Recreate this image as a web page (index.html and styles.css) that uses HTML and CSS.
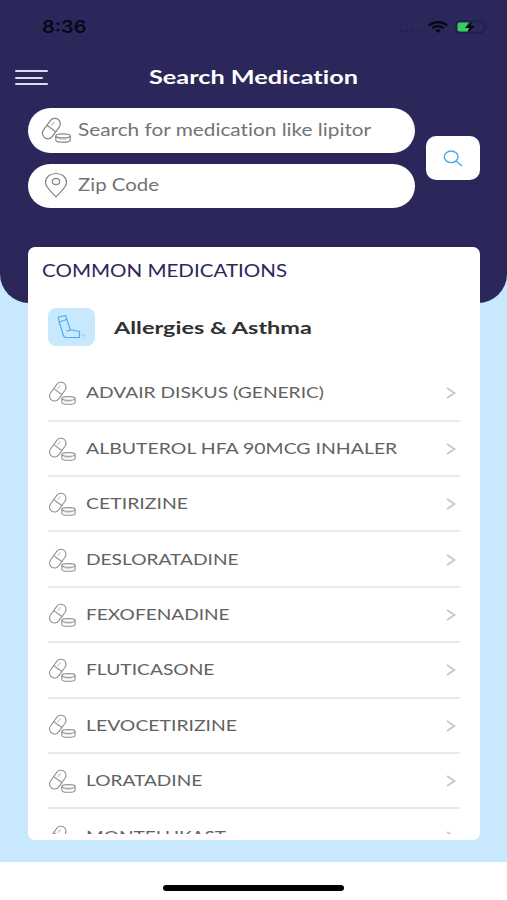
FILE: index.html
```
<!DOCTYPE html>
<html lang="en">
<head>
<meta charset="utf-8">
<title>Search Medication</title>
<link rel="stylesheet" href="styles.css">
</head>
<body>
<svg class="defs" aria-hidden="true">
  <symbol id="pills" viewBox="0 0 30 26">
    <g fill="none" stroke="currentColor" stroke-width="1.2">
      <rect x="4.900" y=".2" width="11" height="22.600" rx="5.500" transform="rotate(36 10.400 11.500)"/>
      <path d="M6 8.300 14.800 14.700"/>
      <path d="M10.300 8.500 13.300 4.800" stroke-opacity=".5"/>
      <path d="M14.800 18.900v4c0 3 14.400 3 14.400 0v-4"/>
      <ellipse cx="22" cy="18.900" rx="7.200" ry="2"/>
      <path d="M18 22.200h7" stroke-opacity=".35"/>
    </g>
  </symbol>
  <symbol id="chevron" viewBox="0 0 10 12">
    <path d="m1 1 7.5 5L1 11" fill="none" stroke="#c6c6ca" stroke-width="1.7"/>
  </symbol>
</svg>
<div class="screen">
  <header class="top">
    <div class="status">
      <span class="time"><span class="w">8:36</span></span>
      <span class="dots"><i></i><i></i><i></i><i></i></span>
      <svg class="wifi" viewBox="0 0 20 12">
        <g fill="none" stroke="#080815" stroke-width="2.3">
          <path d="M1 4.3C6-.1 14-.1 19 4.3"/><path d="M4.3 7.2c3.3-2.7 8.1-2.7 11.4 0"/>
        </g>
        <path d="M7 9.3c1.8-1.4 4.2-1.4 6 0L10 12z" fill="#080815"/>
      </svg>
      <svg class="battery" viewBox="0 0 34 14">
        <rect x="1" y="1" width="28" height="12" rx="3.5" fill="none" stroke="#1c1a42"/>
        <path d="M31 5.2c2 .6 2 3 0 3.6z" fill="#1c1a42"/>
        <path d="M4.5 2.5H14L10 8h4l-1.5 3.5h-8Q2.5 11.500 2.500 9.500v-5q0-2 2-2z" fill="#37cf5b"/>
        <path d="M17.500 1.500 10 8h4.500L13 12.500 20 6h-4.500z" fill="#05050d"/>
      </svg>
    </div>
    <div class="bar">
      <div class="menu"><i></i><i></i><i></i></div>
      <h1><span class="w">Search Medication</span></h1>
    </div>
    <div class="search">
      <div class="fields">
        <div class="field"><svg class="fi"><use href="#pills"/></svg><span class="w f1">Search for medication like lipitor</span></div>
        <div class="field"><svg class="pin" viewBox="0 0 24 26"><g fill="none" stroke="#858585" stroke-width="1.2"><path d="M12 25C8 20 1.500 15.500 1.500 10.500 1.500 5 6 1.500 12 1.500s10.500 3.500 10.500 9C22.500 15.500 16 20 12 25z"/><ellipse cx="12" cy="9.500" rx="3.700" ry="3.100"/></g></svg><span class="w f2">Zip Code</span></div>
      </div>
      <div class="go"><svg viewBox="0 0 20 17"><g fill="none" stroke="#48a9ee" stroke-width="1.400"><ellipse cx="8.200" cy="6.800" rx="6.900" ry="5.800"/><path d="m13 11 6 5"/></g></svg></div>
    </div>
  </header>
  <main class="card">
    <h2><span class="w">COMMON MEDICATIONS</span></h2>
    <div class="group">
      <div class="tile"><svg viewBox="0 0 30 26"><g fill="none" stroke="#4fabf3" stroke-width="1.200" stroke-linejoin="round"><path d="M1.200 3.200 8.500 1.500 9.800 5.500 2.200 8z"/><path d="M2.200 8 6.500 21.800q.5 1.700 2.500 1.700h13.500v-6L15.500 16h-2L9.800 5.500"/><path d="M9.500 17.300l4-1.300"/></g><path d="M24.500 21.500h1m0-1.500h1m0 3h1m-1-1.500h1" stroke="#4fabf3" stroke-width=".8" opacity=".7"/></svg></div>
      <h3><span class="w">Allergies &amp; Asthma</span></h3>
    </div>
    <ul>
      <li><svg class="ri"><use href="#pills"/></svg><span class="w r1">ADVAIR DISKUS (GENERIC)</span><svg class="ch"><use href="#chevron"/></svg></li>
      <li><svg class="ri"><use href="#pills"/></svg><span class="w r2">ALBUTEROL HFA 90MCG INHALER</span><svg class="ch"><use href="#chevron"/></svg></li>
      <li><svg class="ri"><use href="#pills"/></svg><span class="w r3">CETIRIZINE</span><svg class="ch"><use href="#chevron"/></svg></li>
      <li><svg class="ri"><use href="#pills"/></svg><span class="w r4">DESLORATADINE</span><svg class="ch"><use href="#chevron"/></svg></li>
      <li><svg class="ri"><use href="#pills"/></svg><span class="w r5">FEXOFENADINE</span><svg class="ch"><use href="#chevron"/></svg></li>
      <li><svg class="ri"><use href="#pills"/></svg><span class="w r6">FLUTICASONE</span><svg class="ch"><use href="#chevron"/></svg></li>
      <li><svg class="ri"><use href="#pills"/></svg><span class="w r7">LEVOCETIRIZINE</span><svg class="ch"><use href="#chevron"/></svg></li>
      <li><svg class="ri"><use href="#pills"/></svg><span class="w r8">LORATADINE</span><svg class="ch"><use href="#chevron"/></svg></li>
      <li><svg class="ri"><use href="#pills"/></svg><span class="w r9">MONTELUKAST</span><svg class="ch"><use href="#chevron"/></svg></li>
    </ul>
  </main>
  <footer><div class="home"></div></footer>
</div>
</body>
</html>
```
FILE: styles.css
```
* { box-sizing: border-box; margin: 0; padding: 0; }
body { width: 507px; height: 900px; overflow: hidden; font-family: Lato, "Open Sans", sans-serif; font-variant-ligatures: none; }
.defs { display: none; }
svg { display: block; flex: none; }
.screen { height: 900px; display: flex; flex-direction: column; background: #c8e8fe; }
.w { display: inline-block; white-space: nowrap; transform: scaleX(var(--s, 1.2)); transform-origin: 0 50%; }
.top { height: 303px; flex: none; background: #2b275b; border-radius: 0 0 29px 29px; }
.status { height: 53px; display: flex; align-items: center; padding-left: 42px; }
.time { width: 357px; color: #080815; font: 600 17px/20px Inter, sans-serif; --s: 1.17; }
.dots { width: 29px; display: flex; gap: 3px; padding-top: 8px; }
.dots i { width: 3px; height: 2px; border-radius: 2px; background: #242150; }
.wifi { width: 20px; height: 12px; }
.battery { width: 34px; height: 14px; margin-left: 7px; }
.bar { height: 55px; display: flex; align-items: center; padding: 0 0 6px 15px; }
.menu { width: 134px; display: flex; flex-direction: column; gap: 4.500px; }
.menu i { width: 33px; height: 2px; border-radius: 1px; background: #dcdcef; }
.menu i:nth-child(2) { width: 28px; }
h1 { font-size: 19px; line-height: 24px; font-weight: 700; color: #fff; --s: 1.33; margin-top: -1px; }
.search { display: flex; align-items: center; gap: 11px; padding-left: 28px; }
.fields { width: 387px; display: grid; gap: 11px; }
.field { height: 44.500px; border-radius: 23px; background: #fff; display: flex; align-items: center; color: #737373; font-size: 16.500px; padding-bottom: 1px; }
.f1 { --s: 1.26; }
.f2 { --s: 1.236; }
.fi { width: 30px; height: 26px; margin: 1px 7px 0 13px; color: #858585; }
.pin { width: 24px; height: 26px; margin: 0 10px 0 16px; }
.go { width: 54px; height: 44px; border-radius: 10px; background: #fff; display: grid; place-items: center; }
.go svg { width: 20px; height: 17px; }
.card { width: 452px; height: 593px; flex: none; margin: -56px 0 0 28px; background: #fff; border-radius: 7px; position: relative; padding-bottom: 6px; display: flex; flex-direction: column; }
h2 { height: 61px; flex: none; padding: 13.500px 0 0 14px; font-size: 16.500px; line-height: 21px; font-weight: 400; color: #2b275b; --s: 1.245; }
.group { height: 58.300px; flex: none; display: flex; align-items: flex-start; padding-left: 20px; }
.tile { width: 47px; height: 38px; border-radius: 8px; background: #c8e8fe; display: grid; place-items: center; }
.tile svg { width: 30px; height: 26px; }
h3 { margin: 8px 0 0 19px; font-size: 17.500px; line-height: 24px; font-weight: 700; color: #303030; --s: 1.34; }
ul { flex: 1; min-height: 0; overflow: hidden; list-style: none; margin: 0 20px; }
li { height: 55.400px; border-bottom: 2px solid #e9e9e9; display: flex; align-items: center; color: #626262; font-size: 16px; }
li .w { line-height: 20px; margin-bottom: 1px; }
.r1 { --s: 1.2; }
.r2 { --s: 1.216; }
.r3 { --s: 1.215; }
.r4 { --s: 1.196; }
.r5 { --s: 1.192; }
.r6 { --s: 1.2; }
.r7 { --s: 1.211; }
.r8 { --s: 1.193; }
.r9 { --s: 1.19; }
.ri { width: 28px; height: 24px; margin: 1px 10px 0 0; color: #909090; }
.ch { width: 10px; height: 12px; margin: 1px 4px 0 auto; }
footer { margin-top: 22px; height: 38px; background: #fff; display: grid; place-items: center; padding-top: 14px; }
.home { width: 181px; height: 6px; border-radius: 3px; background: #000; }
```
